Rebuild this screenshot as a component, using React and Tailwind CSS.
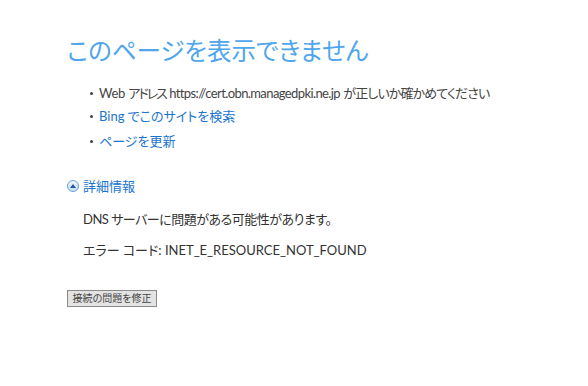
export default function App() {
  const font = { fontFamily: 'Lato, "Noto Sans CJK JP", sans-serif', fontFeatureSettings: '"palt"' };
  return (
    <main className="w-[588px] h-[386px] bg-white text-[#444444] pl-[67px] pt-[32px]" style={font}>
      <h1 className="text-[24.5px] leading-[38px] text-[#4fa6ec] font-normal">このページを表示できません</h1>

      <ul className="mt-[13px] ml-[23px] text-[13px] flex flex-col gap-[3px]">
        <li className="flex items-center leading-[20px]">
          <span className="w-[3px] h-[3px] rounded-full bg-[#444444] mr-[6px]" />
          <span className="whitespace-pre">
            <span className="tracking-[-0.3px]">Web</span>{" "}
            <span className="tracking-[-2px]">アドレス</span>{" "}
            <span className="tracking-[-0.6px]">https://cert.obn.managedpki.ne.jp</span>{" "}
            <span className="tracking-[-0.9px]">が正しいか確かめてください</span>
          </span>
        </li>
        <li className="flex items-center leading-[20px]">
          <span className="w-[3px] h-[3px] rounded-full bg-[#444444] mr-[6px]" />
          <span className="text-[#1a74d0]">Bing でこのサイトを検索</span>
        </li>
        <li className="flex items-center leading-[20px] mt-[2px]">
          <span className="w-[3px] h-[3px] rounded-full bg-[#444444] mr-[6px]" />
          <span className="text-[#1a74d0]">ページを更新</span>
        </li>
      </ul>

      <div className="mt-[25px] flex items-center gap-[4px] text-[13px] leading-[20px] text-[#1a74d0]">
        <span className="w-[12px] h-[12px] rounded-full border border-[#6aa0d8] bg-gradient-to-b from-[#eef5fd] to-[#c9dff5] flex items-center justify-center">
          <svg width="6" height="4" viewBox="0 0 6 4"><path d="M0 4 L3 0 L6 4 Z" fill="#1a5aa8" /></svg>
        </span>
        <span>詳細情報</span>
      </div>

      <div className="pl-[16px] text-[13px] leading-[20px] text-[#333333]">
        <p className="mt-[13px] tracking-[-0.5px]">DNS サーバーに問題がある可能性があります。</p>
        <p className="mt-[11px]">エラー コード: INET_E_RESOURCE_NOT_FOUND</p>
      </div>

      <button className="mt-[30px] h-[17px] w-[90px] border border-[#8a8a8a] bg-[#e3e3e3] text-[10px] leading-[15px] text-[#444444] flex items-center justify-center">
        接続の問題を修正
      </button>
    </main>
  );
}
